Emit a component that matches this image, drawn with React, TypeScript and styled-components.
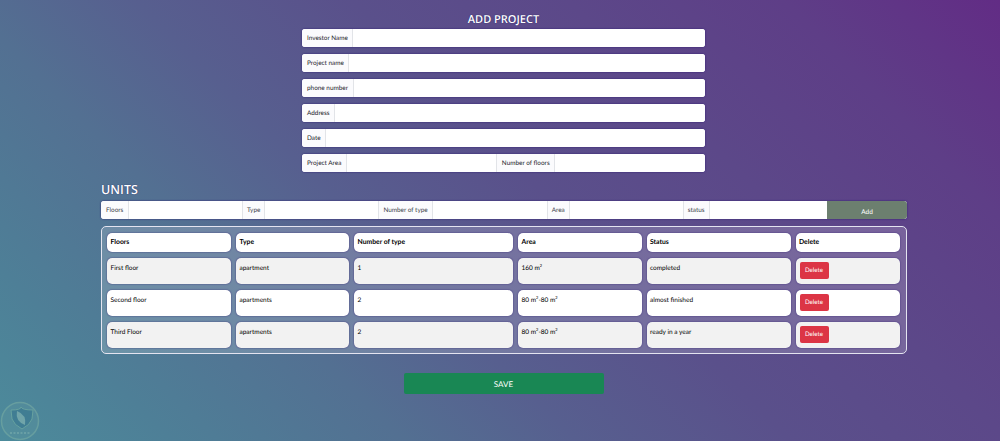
import React from "react";
import styled, { createGlobalStyle } from "styled-components";

const GlobalStyle = createGlobalStyle`
  html, body {
    margin: 0;
    padding: 0;
    height: 100%;
  }
  body {
    font-family: Lato, "Open Sans", sans-serif;
    color: #212529;
    text-rendering: geometricPrecision;
  }
  * {
    box-sizing: border-box;
  }
  button {
    text-rendering: geometricPrecision;
  }
`;

const Page = styled.div`
  position: relative;
  width: 1000px;
  height: 441px;
  overflow: hidden;
  background: linear-gradient(45deg, #4c8b9b 0%, #4e7f97 12%, #537092 28%, #575f8f 40%, #5a508b 55%, #5c4889 70%, #5e3e87 85%, #622c85 100%);
  padding-top: 13px;
`;

const ProjectForm = styled.section`
  width: 403px;
  margin-left: 302px;
  display: flex;
  flex-direction: column;
  gap: 7px;
`;

const Heading = styled.h2<{ center?: boolean }>`
  margin: 0;
  color: #fff;
  font-family: "Open Sans", sans-serif;
  font-size: 11px;
  line-height: 14px;
  font-weight: 600;
  text-shadow: 0 0 1px #1a1a5c;
  text-align: ${({ center }) => (center ? "center" : "left")};
`;

const ProjectHeading = styled(Heading)`
  margin-bottom: -5px;
`;

const UnitsHeading = styled(Heading)`
  font-size: 12.5px;
  line-height: 16px;
`;

const InputRow = styled.div`
  display: flex;
  height: 18px;
  background: #fff;
  border-radius: 3px;
  overflow: hidden;
  box-shadow: 0 0 2px #2a1a70;
`;

const Label = styled.span`
  display: flex;
  align-items: center;
  height: 100%;
  padding: 0 4.5px 0 5px;
  font-size: 6.4px;
  color: #1c222a;
  white-space: nowrap;
  background: #fbfbfd;
  border-right: 1px solid #e2e4e8;
`;

const SideLabel = styled(Label)`
  border-left: 1px solid #e2e4e8;
`;

const Field = styled.div<{ width?: number }>`
  flex: ${({ width }) => (width ? `0 0 ${width}px` : "1")};
  background: #fff;
`;

const Units = styled.section`
  width: 806px;
  margin: 10px 0 0 101px;
`;

const UnitsBar = styled(InputRow)`
  margin-top: 3px;
`;

const UnitLabel = styled(Label)`
  color: #3c424a;
`;

const UnitSideLabel = styled(UnitLabel)`
  border-left: 1px solid #e2e4e8;
  padding: 0 4px;
`;

const AddButton = styled.button`
  flex: 0 0 80px;
  border: 0;
  margin: 0;
  padding: 5px 0 0;
  background: #6c7f6f;
  color: #fff;
  font: 6.5px Lato, sans-serif;
  border-radius: 0 2px 2px 0;
`;

const TablePanel = styled.div`
  margin-top: 7px;
  height: 128px;
  padding: 6px 6px 5px 5px;
  border: 1px solid #e4e4f0;
  border-radius: 5px;
  background: rgba(255, 255, 255, 0.17);
  display: grid;
  grid-template-columns: 124px 113px 159px 123.5px 144px 104px;
  grid-template-rows: 19px 26px 26px 26px;
  column-gap: 5px;
  row-gap: 6px;
`;

const Cell = styled.div<{ shaded?: boolean; head?: boolean }>`
  background: ${({ shaded }) => (shaded ? "#f2f2f2" : "#fff")};
  border-radius: 5px;
  padding: ${({ head }) => (head ? "0 3.5px" : "4.5px 3.5px")};
  font-size: ${({ head }) => (head ? "6.8px" : "6.5px")};
  line-height: ${({ head }) => (head ? "19px" : "11px")};
  font-weight: ${({ head }) => (head ? 700 : 400)};
  color: #000;
  box-shadow: 0 0 1.5px #2a1a70;
  white-space: nowrap;
`;

const DeleteCell = styled(Cell)`
  padding: 4px;
`;

const DeleteButton = styled.button`
  display: block;
  width: 29px;
  height: 17px;
  border: 0;
  padding: 0;
  border-radius: 2px;
  background: #dc3545;
  color: #fff;
  font: 6.2px Lato, sans-serif;
`;

const Sup = styled.sup`
  font-size: 4px;
  line-height: 0;
`;

const SaveRow = styled.div`
  display: flex;
  justify-content: center;
  margin-top: 19px;
`;

const SaveButton = styled.button`
  width: 200px;
  height: 21px;
  margin-left: -1px;
  border: 0;
  border-radius: 2px;
  background: #198754;
  color: #fff;
  font: 8px Lato, sans-serif;
`;

const Watermark = styled.svg`
  position: absolute;
  left: 0;
  bottom: 0;
  width: 40px;
  height: 40px;
  opacity: 0.4;
`;

const projectFields = ["Investor Name", "Project name", "phone number", "Address", "Date"];

const rows = [
  { floor: "First floor", type: "apartment", count: "1", area: "160", range: false, status: "completed" },
  { floor: "Second floor", type: "apartments", count: "2", area: "80", range: true, status: "almost finished" },
  { floor: "Third Floor", type: "apartments", count: "2", area: "80", range: true, status: "ready in a year" },
];

const App: React.FC = () => {
  return (
    <Page>
      <GlobalStyle />
      <ProjectForm>
        <ProjectHeading center>ADD PROJECT</ProjectHeading>
        {projectFields.map((name) => (
          <InputRow key={name}>
            <Label>{name}</Label>
            <Field />
          </InputRow>
        ))}
        <InputRow>
          <Label>Project Area</Label>
          <Field width={149} />
          <SideLabel>Number of floors</SideLabel>
          <Field />
        </InputRow>
      </ProjectForm>

      <Units>
        <UnitsHeading>UNITS</UnitsHeading>
        <UnitsBar>
          <UnitLabel>Floors</UnitLabel>
          <Field width={113} />
          <UnitSideLabel>Type</UnitSideLabel>
          <Field width={113} />
          <UnitSideLabel>Number of type</UnitSideLabel>
          <Field width={114} />
          <UnitSideLabel>Area</UnitSideLabel>
          <Field width={113} />
          <UnitSideLabel>status</UnitSideLabel>
          <Field />
          <AddButton>Add</AddButton>
        </UnitsBar>

        <TablePanel>
          {["Floors", "Type", "Number of type", "Area", "Status", "Delete"].map((title) => (
            <Cell head key={title}>
              {title}
            </Cell>
          ))}
          {rows.map((row, index) => {
            const shaded = index % 2 === 0;
            return (
              <React.Fragment key={row.floor}>
                <Cell shaded={shaded}>{row.floor}</Cell>
                <Cell shaded={shaded}>{row.type}</Cell>
                <Cell shaded={shaded}>{row.count}</Cell>
                <Cell shaded={shaded}>
                  {row.area} m<Sup>2</Sup>
                  {row.range && (
                    <>
                      -80 m<Sup>2</Sup>
                    </>
                  )}
                </Cell>
                <Cell shaded={shaded}>{row.status}</Cell>
                <DeleteCell shaded={shaded}>
                  <DeleteButton>Delete</DeleteButton>
                </DeleteCell>
              </React.Fragment>
            );
          })}
        </TablePanel>

        <SaveRow>
          <SaveButton>SAVE</SaveButton>
        </SaveRow>
      </Units>

      <Watermark viewBox="0 0 40 40">
        <circle cx="20" cy="20" r="18.5" fill="#7fb0a8" fillOpacity="0.3" stroke="#8fbfa8" strokeWidth="1.5" />
        <path d="M11 9 Q21 9 21 6 Q22 9 33 9 L32 18 Q30 24 22 28 Q14 24 12 18 Z" fill="#2f6f8a" stroke="#8fc8a8" strokeWidth="1" />
        <path d="M17 10 Q27 14 25 24 Q15 20 17 10 Z" fill="#a6d0c0" />
        <path d="M10 32 H30" stroke="#a6d0c0" strokeWidth="1.5" strokeDasharray="2 1.5" />
      </Watermark>
    </Page>
  );
};

export default App;
